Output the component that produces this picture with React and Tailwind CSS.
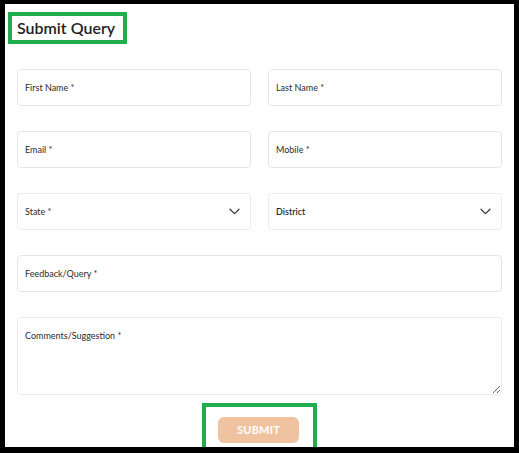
import React from 'react';

// Small chevron used by the two select boxes
function Chevron() {
  return (
    <svg width="11" height="7" viewBox="0 0 11 7" fill="none" className="shrink-0">
      <path d="M1 1.2L5.5 5.6L10 1.2" stroke="#3a3a3a" strokeWidth="1.3" strokeLinecap="round" strokeLinejoin="round" />
    </svg>
  );
}

function Field({ label }) {
  return (
    <div className="h-[37px] flex items-center px-[7px] border border-[#e6e6e6] rounded-[4px] bg-white text-[9px] text-[#2b2b2b]">
      {label}
    </div>
  );
}

function SelectBox({ label, bold }) {
  return (
    <div className="h-[37px] flex items-center justify-between pl-[7px] pr-[10px] border border-[#ececec] rounded-[4px] bg-white text-[9px] text-[#2b2b2b]">
      <span className={bold ? 'font-semibold' : ''}>{label}</span>
      <Chevron />
    </div>
  );
}

export default function App() {
  return (
    <div
      className="w-[519px] h-[453px] bg-white border-l-[5px] border-t-[4px] border-r-[5px] border-b-[6px] border-black flex flex-col overflow-hidden"
      style={{ fontFamily: 'Lato, "Noto Sans", sans-serif' }}
    >
      {/* Heading */}
      <div className="pl-[3px] pt-[8px]">
        <h2 className="inline-flex items-center h-[32px] pl-[5px] pr-[8px] border-[4px] border-[#1fae4b] text-[16px] font-semibold text-[#222]">
          Submit Query
        </h2>
      </div>

      {/* Form */}
      <div className="px-3 pt-[25px] flex flex-col gap-[25px]">
        <div className="grid grid-cols-2 gap-[17px]">
          <Field label="First Name *" />
          <Field label="Last Name *" />
        </div>
        <div className="grid grid-cols-2 gap-[17px]">
          <Field label="Email *" />
          <Field label="Mobile *" />
        </div>
        <div className="grid grid-cols-2 gap-[17px]">
          <SelectBox label="State *" />
          <SelectBox label="District" bold />
        </div>
        <Field label="Feedback/Query *" />
        <textarea
          placeholder="Comments/Suggestion *"
          className="h-[78px] w-full px-[7px] pt-[11px] border border-[#ececec] rounded-[4px] text-[9px] text-[#2b2b2b] placeholder:text-[#2b2b2b] outline-none"
        />
      </div>

      {/* Submit */}
      <div className="flex justify-center pt-[8px]">
        <div className="w-[115px] h-[48px] border-[4px] border-[#1fae4b] flex justify-center pt-[10px] pr-[2px]">
          <button className="w-[81px] h-[26px] rounded-[6px] bg-[#f0c3a0] text-white text-[11px] font-bold tracking-[0.2px]">
            SUBMIT
          </button>
        </div>
      </div>
    </div>
  );
}
